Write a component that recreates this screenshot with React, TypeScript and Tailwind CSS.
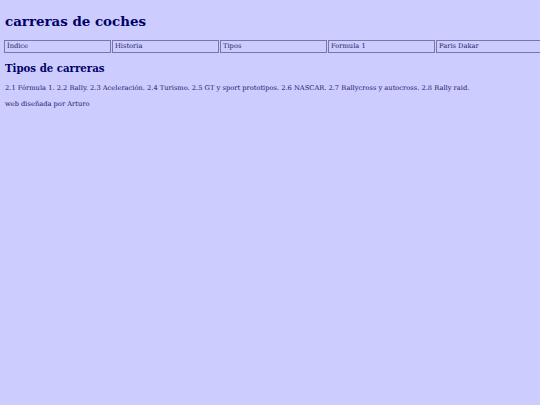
export default function App() {
  const links = ["Índice", "Historia", "Tipos", "Formula 1", "Paris Dakar"];
  return (
    <div className="min-h-[405px] w-[540px] overflow-hidden bg-[#ccccff] px-[5px] pt-[12px] text-[6.7px] text-[#000066] [font-family:'DejaVu_Serif',serif]">
      <h1 className="text-[13.4px] font-bold leading-[18px] text-[#000066]">carreras de coches</h1>
      <div className="mt-[10px] -ml-px flex whitespace-nowrap">
        {links.map((l) => (
          <div
            key={l}
            className="mr-px h-[13px] w-[107px] shrink-0 border border-[#7777aa] px-[2px] leading-[11px] text-[#222266]"
          >
            {l}
          </div>
        ))}
      </div>
      <h2 className="mt-[8px] text-[10.2px] font-bold leading-[14px] text-[#000066]">Tipos de carreras</h2>
      <p className="mt-[9px] leading-[9px] text-[#222266]">
        2.1 Fórmula 1. 2.2 Rally. 2.3 Aceleración. 2.4 Turismo. 2.5 GT y sport prototipos. 2.6 NASCAR. 2.7 Rallycross y autocross. 2.8 Rally raid.
      </p>
      <p className="mt-[7px] leading-[9px] text-[#222266]">web diseñada por Arturo</p>
    </div>
  );
}
